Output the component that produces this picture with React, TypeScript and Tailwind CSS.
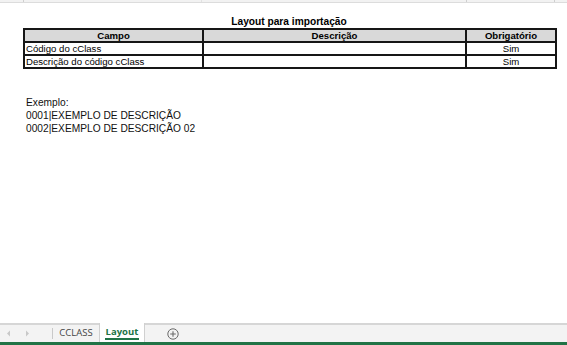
import React from "react";

const rows = [
  { campo: "Código do cClass", descricao: "", obrigatorio: "Sim" },
  { campo: "Descrição do código cClass", descricao: "", obrigatorio: "Sim" },
];

const exemplo = ["Exemplo:", "0001|EXEMPLO DE DESCRIÇÃO", "0002|EXEMPLO DE DESCRIÇÃO 02"];

const ArrowLeft = () => (
  <svg width="5" height="7" viewBox="0 0 5 7">
    <path d="M4 0.5 L1 3.5 L4 6.5 Z" fill="#c8c8c8" />
  </svg>
);

const ArrowRight = () => (
  <svg width="5" height="7" viewBox="0 0 5 7">
    <path d="M1 0.5 L4 3.5 L1 6.5 Z" fill="#c8c8c8" />
  </svg>
);

const PlusCircle = () => (
  <svg width="12" height="12" viewBox="0 0 12 12">
    <circle cx="6" cy="6" r="5.2" fill="none" stroke="#6a6a6a" strokeWidth="1" />
    <path d="M6 3.2 V8.8 M3.2 6 H8.8" stroke="#6a6a6a" strokeWidth="1.1" />
  </svg>
);

export default function App() {
  return (
    <div className="h-[345px] w-[567px] flex flex-col bg-white overflow-hidden font-['Liberation_Sans',Arial,sans-serif]">
      {/* faixa do cabeçalho de colunas */}
      <div className="h-[3px] flex bg-[#f2f2f2] border-b border-[#dcdcdc]">
        <div className="w-[24px] border-r border-[#cfcfcf]" />
        <div className="w-[178px] border-r border-[#e2e2e2]" />
        <div className="w-[265px] border-r border-[#cfcfcf]" />
        <div className="w-[88px] border-r border-[#cfcfcf]" />
      </div>

      <div className="flex-1 pl-[23px]">
        <div className="w-[532px]">
          <div className="h-[25px] flex items-end justify-center pb-[1px] text-[10.2px] font-bold text-black leading-none">
            Layout para importação
          </div>
          <table className="w-[532px] border-collapse table-fixed text-[9.6px] leading-[10px] text-black">
            <colgroup>
              <col className="w-[179px]" />
              <col className="w-[263px]" />
              <col className="w-[90px]" />
            </colgroup>
            <thead>
              <tr className="bg-[#d9d9d9] h-[13px]">
                <th className="border-2 border-[#161616] font-bold text-center p-0">Campo</th>
                <th className="border-2 border-[#161616] font-bold text-center p-0">Descrição</th>
                <th className="border-2 border-[#161616] font-bold text-center p-0">Obrigatório</th>
              </tr>
            </thead>
            <tbody>
              {rows.map((r) => (
                <tr key={r.campo} className="h-[13px]">
                  <td className="border-2 border-[#161616] text-left px-[1px] py-0 whitespace-nowrap">{r.campo}</td>
                  <td className="border-2 border-[#161616] p-0">{r.descricao}</td>
                  <td className="border-2 border-[#161616] text-center p-0">{r.obrigatorio}</td>
                </tr>
              ))}
            </tbody>
          </table>
        </div>

        <div className="mt-[27px] pl-[3px] text-[10.2px] leading-[13px] text-[#111]">
          {exemplo.map((l) => (
            <div key={l}>{l}</div>
          ))}
        </div>
      </div>

      {/* abas das planilhas */}
      <div className="h-[22px] flex flex-col">
        <div className="flex-1 flex items-stretch bg-[#f3f3f3] border-t-2 border-[#d6d6d6] font-['Open_Sans',sans-serif]">
          <div className="w-[52px] flex items-center">
            <div className="w-[5px] ml-[1px]" />
            <ArrowLeft />
            <div className="w-[14px]" />
            <ArrowRight />
          </div>
          <div className="w-px my-[3px] bg-[#c9c9c9]" />
          <div className="w-[46px] flex items-center justify-center text-[9.5px] text-[#444]">CCLASS</div>
          <div className="w-[46px] -mt-[2px] flex flex-col items-center justify-center bg-white border-x border-[#d0d0d0]">
            <span className="text-[9.5px] font-bold text-[#217346] leading-[13px] border-b-2 border-[#217346] px-[1px]">
              Layout
            </span>
          </div>
          <div className="w-[56px] flex items-center justify-center">
            <PlusCircle />
          </div>
        </div>
        <div className="h-[3px] bg-[#217346]" />
      </div>
    </div>
  );
}
